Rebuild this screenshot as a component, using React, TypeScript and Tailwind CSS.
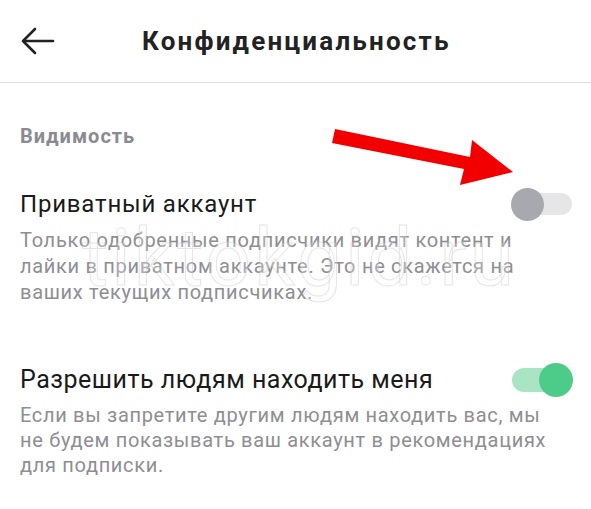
import React from "react";

function Toggle({ on }: { on: boolean }) {
  return on ? (
    <div className="relative w-[62px] h-[36px] flex items-center">
      <div className="absolute left-[1px] w-[52px] h-[24px] rounded-full bg-[#a9e5c5]" />
      <div className="absolute right-[0px] w-[34px] h-[34px] rounded-full bg-[#4ccc88]" />
    </div>
  ) : (
    <div className="relative w-[62px] h-[34px] flex items-center">
      <div className="absolute left-[6px] w-[55px] h-[22px] rounded-full bg-[#e6e6e8]" />
      <div className="absolute left-0 w-[33px] h-[33px] rounded-full bg-[#a8a9ae]" />
    </div>
  );
}

export default function App() {
  return (
    <div
      className="relative w-[591px] h-[509px] bg-white overflow-hidden text-[#161823]"
      style={{ fontFamily: "Roboto, 'Noto Sans', Arial, sans-serif" }}
    >
      <header className="h-[83px] flex items-center border-b border-[#dcdcdc] pl-[21px]">
        <svg width="34" height="28" viewBox="0 0 34 28" fill="none" stroke="#222" strokeWidth="2.6" strokeLinecap="round" strokeLinejoin="round">
          <path d="M32 14H3" />
          <path d="M14 2L2 14l12 12" />
        </svg>
        <h1 className="ml-[87px] text-[26px] leading-[32px] font-bold tracking-[2.2px] text-[#222]">Конфиденциальность</h1>
      </header>

      <div className="px-[20px]">
        <div className="pt-[41px] text-[20px] font-bold text-[#8a8b91] leading-[24px] tracking-[1px]">Видимость</div>

        <div className="mt-[39px] flex items-center justify-between">
          <div className="text-[24px] leading-[30px] tracking-[0.8px] text-[#1a1a1a]">Приватный аккаунт</div>
          <div className="mr-[-2px]"><Toggle on={false} /></div>
        </div>
        <p className="mt-[6px] text-[20px] leading-[26px] tracking-[0.7px] text-[#8e8e93] whitespace-nowrap">
          Только одобренные подписчики видят контент и<br />
          лайки в приватном аккаунте. Это не скажется на<br />
          ваших текущих подписчиках.
        </p>

        <div className="mt-[57px] flex items-center justify-between">
          <div className="text-[25px] leading-[30px] tracking-[0.5px] text-[#1a1a1a]">Разрешить людям находить меня</div>
          <div className="mr-[-2px]"><Toggle on={true} /></div>
        </div>
        <p className="mt-[5px] text-[20px] leading-[25px] tracking-[0.68px] text-[#8e8e93] whitespace-nowrap">
          Если вы запретите другим людям находить вас, мы<br />
          не будем показывать ваш аккаунт в рекомендациях<br />
          для подписки.
        </p>
      </div>

      <div className="absolute left-[82px] top-[218px] text-[80px] font-normal leading-none text-white/25 [-webkit-text-stroke:1px_rgba(190,190,190,0.4)] tracking-[3px] pointer-events-none select-none">
        tiktokgid.ru
      </div>

      <svg className="absolute left-[330px] top-[125px] pointer-events-none" width="200" height="70" viewBox="0 0 200 70">
        <polygon points="5,4 140,32 142,15 183,47 130,60 134,44 2,18" fill="#f20000" />
      </svg>
    </div>
  );
}
